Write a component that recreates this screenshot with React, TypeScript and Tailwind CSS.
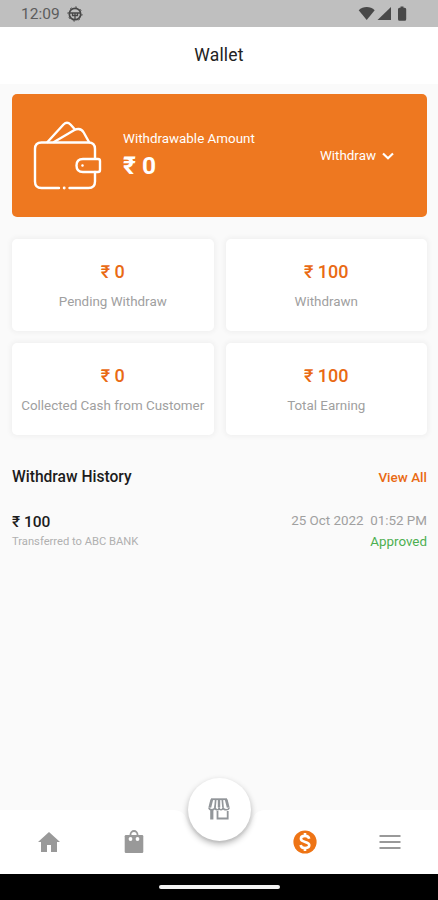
import React from "react";

const stats = [
  { value: "₹ 0", label: "Pending Withdraw" },
  { value: "₹ 100", label: "Withdrawn" },
  { value: "₹ 0", label: "Collected Cash from Customer" },
  { value: "₹ 100", label: "Total Earning" },
];

function StatusBar() {
  return (
    <div className="flex h-[27px] shrink-0 items-center bg-[#bfbfbf] pl-[21px] pr-[30px] pt-[1px] text-[#5c5c5c]">
      <span className="mt-[2px] w-[38px] whitespace-nowrap text-[15.5px] leading-none">12:09</span>
      <svg className="ml-[8px]" width="16" height="16" viewBox="0 0 16 16" fill="none" stroke="#484848">
        <circle cx="8" cy="8" r="5.7" strokeWidth="1.7" />
        <circle cx="8" cy="8" r="7" strokeWidth="1" strokeDasharray="1.8 3.7" />
        <path d="M2.500 7h11M8 7v6.500M5.500 7v2.500h5V7" strokeWidth="1.300" />
      </svg>
      <svg className="ml-auto" width="50" height="16" viewBox="0 0 50 16" fill="#484848">
        <path d="M.7 4.3C5-.1 12.5-.1 16.7 4.3L8.700 14z" />
        <path d="M33 1v13H19.500z" />
        <path d="M42.500 1.700V.5h3v1.200h1.200q1.500 0 1.500 1.500v10q0 1.500-1.500 1.500h-5.200q-1.500 0-1.500-1.500v-10q0-1.500 1.500-1.500z" />
      </svg>
    </div>
  );
}

function WalletIcon() {
  return (
    <svg className="-ml-[1px] shrink-0" width="72" height="72" viewBox="0 0 72 72" fill="none" stroke="#fff" strokeWidth="2.4" strokeLinecap="round" strokeLinejoin="round">
      <path d="M27 68H9.500q-6.500 0-6.500-6.500v-32.500q0-6.500 6.500-6.500h47q6.500 0 6.500 6.500v9.500M63 52v9.500q0 6.500-6.500 6.500H37.500" />
      <path d="M15.500 22 31.500 4.500q3.500-3.500 7 0l4.500 5M22 22 42 10.200q6.500-3.200 9.700 2.300L57 22" />
      <path d="M51 39h15q2 0 2 2v9q0 2-2 2H51q-6.500 0-6.500-6.500T51 39z" />
      <circle cx="50.500" cy="45.500" r=".7" fill="#fff" strokeWidth="1.200" />
      <circle cx="32.200" cy="68" r=".6" fill="#fff" strokeWidth="1.700" />
    </svg>
  );
}

function BalanceCard() {
  return (
    <section className="flex h-[123px] items-center rounded-[5px] bg-[#ee7820] pl-[21px] pr-[32px] text-white">
      <WalletIcon />
      <div className="ml-[19px]">
        <p className="whitespace-nowrap text-[13.4px] leading-[18px]">Withdrawable Amount</p>
        <p className="mt-[3px] text-[24.5px] font-bold leading-[30px]">₹ 0</p>
      </div>
      <button className="ml-auto flex items-center whitespace-nowrap text-[13.4px] leading-[18px]">
        Withdraw
        <svg className="ml-[5px]" width="14" height="12" viewBox="0 0 14 12" fill="none" stroke="#fff" strokeWidth="2.200">
          <path d="m2 3.500 5 4.700 5-4.700" />
        </svg>
      </button>
    </section>
  );
}

function HomeIcon() {
  return (
    <svg width="22" height="20" viewBox="0 0 22 20" fill="#999">
      <path d="M11 0 22 10h-3v10h-6v-7H9v7H3V10H0z" />
    </svg>
  );
}

function BagIcon() {
  return (
    <svg width="20" height="24" viewBox="0 0 20 24">
      <path d="M2 5h16q1.300 0 1.300 1.300v15.400q0 1.300-1.300 1.300H2Q.7 23 .7 21.700V6.300Q.7 5 2 5z" fill="#999" />
      <path d="M6.500 8V4.500a3.500 3.500 0 0 1 7 0V8" fill="none" stroke="#999" strokeWidth="1.800" />
      <path d="M8 5a2 2.200 0 0 1 4 0z" fill="#fff" />
      <circle cx="6.500" cy="9" r="1.900" fill="#fff" />
      <circle cx="13.500" cy="9" r="1.900" fill="#fff" />
    </svg>
  );
}

function DollarIcon() {
  return (
    <svg width="24" height="24" viewBox="0 0 24 24">
      <circle cx="12" cy="12" r="11.600" fill="#ee7415" />
      <path d="M16.200 8.800C15.800 6.800 14.300 5.900 12 5.900c-2.400 0-4.100 1.100-4.100 2.900 0 4.200 8.400 2 8.400 6.300 0 1.900-1.700 3-4.300 3-2.500 0-4-1-4.400-3.200M12 3v3m0 12v3" fill="none" stroke="#fff" strokeWidth="2.600" />
    </svg>
  );
}

function MenuIcon() {
  return (
    <svg width="22" height="16" viewBox="0 0 22 16" stroke="#999" strokeWidth="2.200">
      <path d="M.5 2h21M.5 8h21M.5 14h21" />
    </svg>
  );
}

function StoreIcon() {
  return (
    <svg width="24" height="24" viewBox="0 0 24 24" fill="none" stroke="#92969a" strokeWidth="1.800">
      <path d="M4 2.200h16" />
      <path d="M4.800 2.500 2.800 10.500M19.200 2.500l2 8" strokeWidth="2.800" />
      <path d="M8.700 2.500 8 10.500M15.300 2.500l.7 8" strokeWidth="1.700" />
      <path d="M12 2.500v8" strokeWidth="2.400" />
      <path d="M1.800 10.500q.5 2.300 3 2.300T8 10.500q.5 2.300 2.300 2.300t1.700-2.300q.2 2.300 2 2.300t2-2.300q.5 2.300 3.200 2.300t3-2.300" strokeWidth="1.500" />
      <path d="M4.800 13v9.500" strokeWidth="3.200" />
      <path d="M10.500 14v7.500h10.200V14" />
    </svg>
  );
}

function BottomNav() {
  return (
    <nav className="relative h-[64px] shrink-0">
      <svg className="absolute inset-0" width="438" height="64" viewBox="0 0 438 64" fill="#fff">
        <path d="M0 0H173Q183 0 186 8A35 35 0 0 0 253 8Q256 0 266 0H438V64H0z" />
      </svg>
      <div className="relative grid h-full grid-cols-5 place-items-center pl-[6px] pr-[5px]">
        <HomeIcon />
        <div className="-mt-px"><BagIcon /></div>
        <button className="flex size-[63px] -translate-y-[33px] items-center justify-center rounded-full bg-white shadow-[0_3px_6px_rgba(0,0,0,0.3)]">
          <StoreIcon />
        </button>
        <div className="-mt-px"><DollarIcon /></div>
        <div className="-mt-px"><MenuIcon /></div>
      </div>
    </nav>
  );
}

export default function App() {
  return (
    <main className="flex h-[900px] w-[438px] flex-col overflow-hidden bg-[#fafafa] font-['Roboto','Noto_Sans',sans-serif]">
      <StatusBar />
      <header className="flex h-[57px] shrink-0 items-center justify-center bg-white text-[17.5px] tracking-[0.2px] text-[#222]">
        Wallet
      </header>
      <div className="flex-1 pl-[12px] pr-[11px] pt-[10px]">
        <BalanceCard />
        <section className="mt-[22px] grid grid-cols-2 gap-x-[12px] gap-y-[12px]">
          {stats.map((s) => (
            <div key={s.label} className="flex h-[92px] flex-col items-center rounded-[5px] bg-white pt-[21px] shadow-[0_0_5px_2px_rgba(0,0,0,0.04)]">
              <p className="text-[18px] font-medium leading-[24px] text-[#e96a14]">{s.value}</p>
              <p className="mt-[9px] whitespace-nowrap text-[13.4px] leading-[18px] text-[#a0a0a0]">{s.label}</p>
            </div>
          ))}
        </section>
        <section className="mt-[33px]">
          <div className="flex h-[20px] items-center justify-between">
            <h2 className="text-[15.6px] font-medium text-[#1c1c1c]">Withdraw History</h2>
            <a className="-mt-px text-[13.5px] font-medium text-[#e96a14]">View All</a>
          </div>
          <div className="mt-[24px] flex justify-between">
            <div>
              <p className="text-[15.500px] font-medium leading-[20px] text-[#1c1c1c]">₹ 100</p>
              <p className="mt-[2px] text-[11.2px] leading-[16px] text-[#b0b0b0]">Transferred to ABC BANK</p>
            </div>
            <div className="text-right text-[13.4px]">
              <p className="whitespace-pre leading-[18px] text-[#a0a0a0]">25 Oct 2022  01:52 PM</p>
              <p className="mt-[3px] leading-[18px] text-[#4caf50]">Approved</p>
            </div>
          </div>
        </section>
      </div>
      <BottomNav />
      <div className="flex h-[26px] shrink-0 justify-center bg-black pt-[11px]">
        <div className="h-[4px] w-[121px] rounded-full bg-[#f2f2f2]" />
      </div>
    </main>
  );
}
